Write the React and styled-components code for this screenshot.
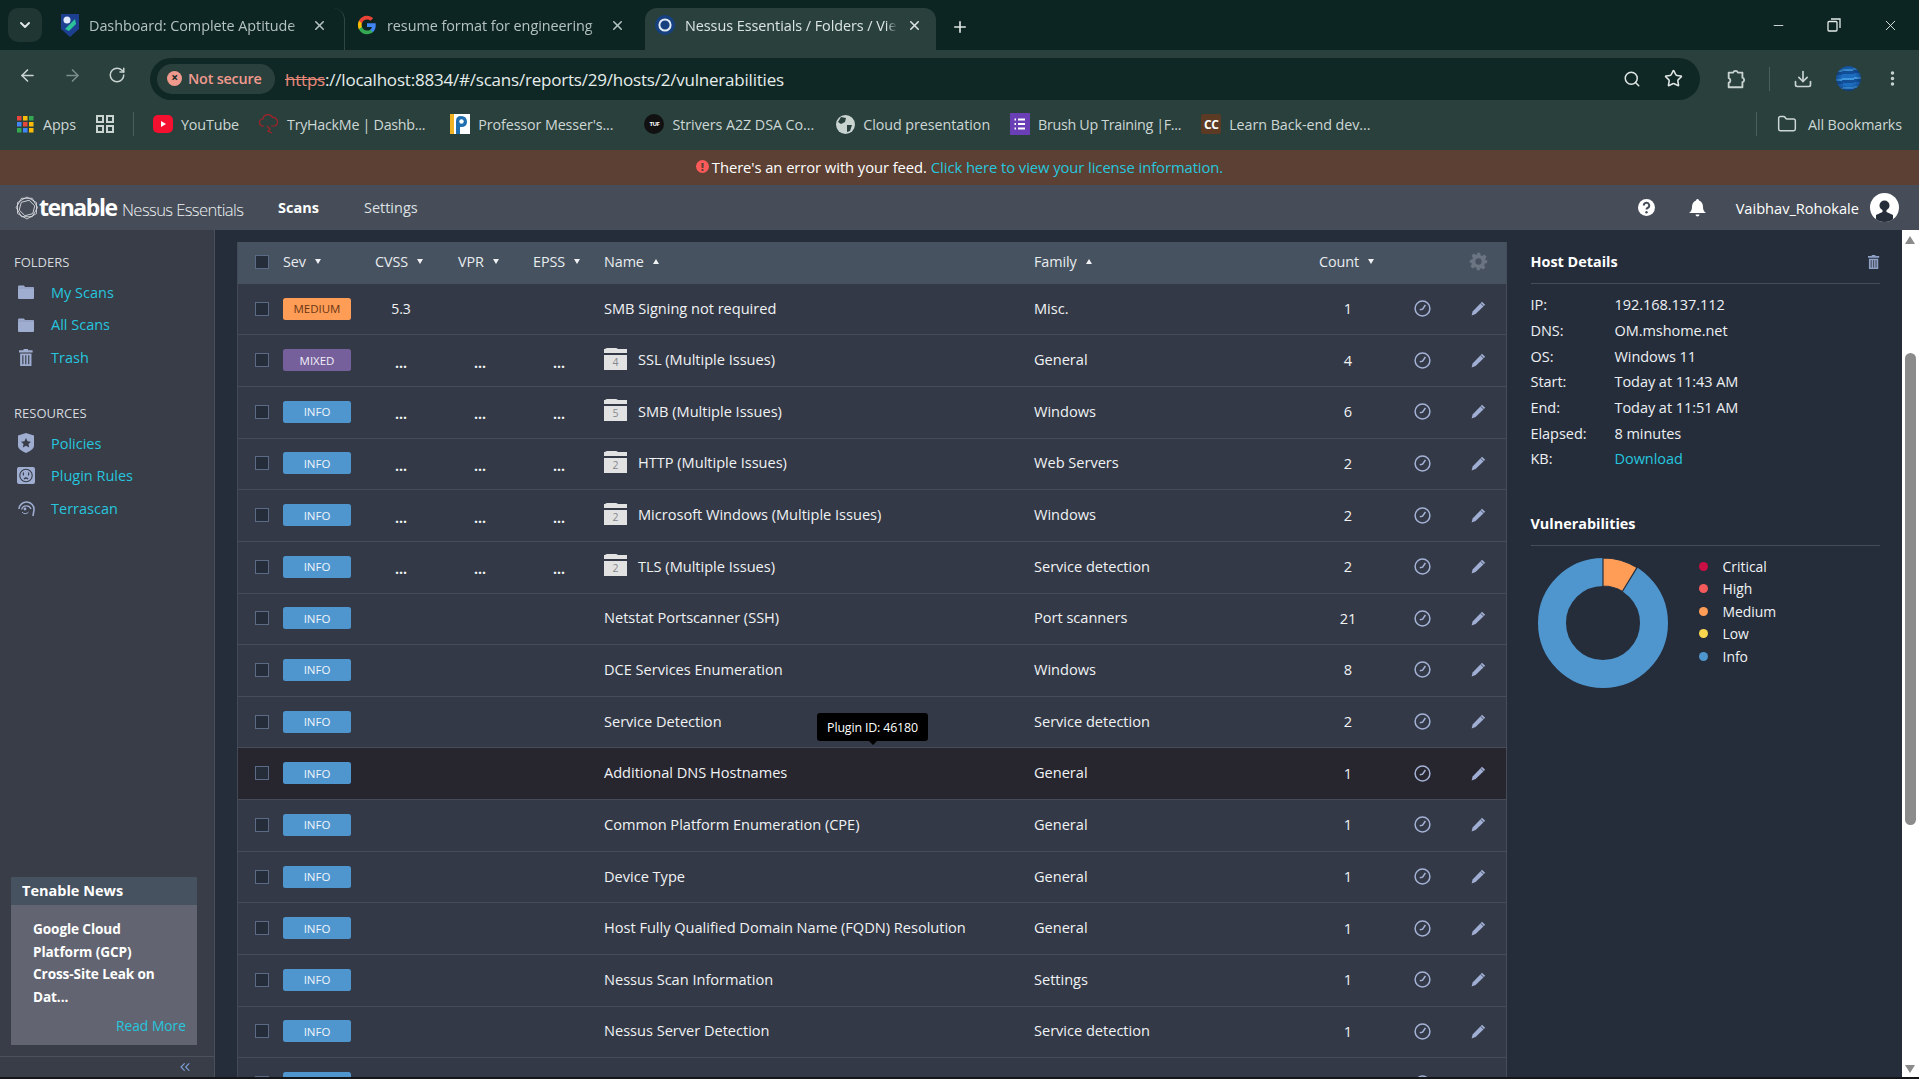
import React from 'react';
import styled, { createGlobalStyle } from 'styled-components';
import { ArrowLeft, ArrowRight, RotateCw, Search, Star, Download, EllipsisVertical, Minus, X, Plus, ChevronDown, Folder as FolderLine, ChevronsLeft } from 'lucide-react';

const Global = createGlobalStyle`
  html, body { margin: 0; padding: 0; background: #252d3b; overflow: hidden; }
  * { box-sizing: border-box; }
  #root { height: 1079px; }
`;
const Page = styled.div`
  height: 1079px; width: 1919px; display: flex; flex-direction: column; overflow: hidden;
  font-family: "Open Sans", "Noto Sans", sans-serif; color: #f0f2f4;
`;

/* ---------- browser chrome ---------- */
const TabStrip = styled.div`
  height: 50px; flex: none; background: #0d2522; display: flex; align-items: flex-end; padding-left: 8px;
`;
const TabMenu = styled.div`
  width: 34px; height: 34px; margin: 0 8px 8px 0; border-radius: 10px; background: #1f3633;
  display: flex; align-items: center; justify-content: center; color: #dfe6e4;
`;
const Tab = styled.div`
  width: ${p => p.$w}px; height: 42px; padding: 0 ${p => p.$pr}px 8px ${p => p.$pl}px; display: flex; align-items: center; gap: 10px;
  position: relative; border-radius: 12px 12px 0 0; font-size: 14.4px; white-space: nowrap;
  background: ${p => p.$active ? '#2a403d' : 'transparent'};
  color: ${p => p.$active ? '#dbe4e1' : '#b5c3c0'};
  ${p => p.$sep && `border-right: 1px solid #2f4643;`}
`;
const TabTitle = styled.span`
  flex: 1; overflow: hidden; letter-spacing: -0.05px;
  mask-image: linear-gradient(to right, #000 95%, transparent 100%);
`;
const NewTab = styled.div`
  margin: 0 0 14px 15px; color: #dfe6e4; display: flex;
`;
const WinControls = styled.div`
  margin-left: auto; height: 50px; display: flex; align-items: center; gap: 41px; padding: 0 20px 0 0; color: #e4ebe9;
`;
const Toolbar = styled.div`
  height: 50px; flex: none; background: #2a403d; display: flex; align-items: center; padding: 0 0 0 18px; color: #c9d4d1;
`;
const NavBtns = styled.div`
  display: flex; gap: 26px; width: 132px; align-items: center;
`;
const Omnibox = styled.div`
  width: 1550px; height: 42px; margin-top: 7px; border-radius: 21px; background: #102825; display: flex; align-items: center; padding: 0 17px 0 7px;
`;
const SecurePill = styled.div`
  width: 118px; height: 30px; border-radius: 15px; background: #2a403d; color: #f09a8e; display: flex; align-items: center; gap: 6px;
  padding-left: 10px; font-size: 14.4px; font-weight: 600; letter-spacing: -0.2px; white-space: nowrap;
`;
const NotSecureDot = styled.span`
  width: 15px; height: 15px; border-radius: 50%; background: #f09a8e; color: #102825; font-size: 12px; line-height: 14px; text-align: center; font-weight: 700; flex: none;
`;
const UrlText = styled.div`
  margin-left: 10px; padding-top: 1px; font-size: 17px; color: #e6eeec; white-space: nowrap; letter-spacing: -0.21px;
`;
const Https = styled.span`
  color: #e8887b; text-decoration: line-through;
`;
const OmniIcons = styled.div`
  margin-left: auto; display: flex; align-items: center; gap: 23px; color: #dfe6e4;
`;
const ToolIcons = styled.div`
  display: flex; align-items: center; color: #c9d4d1; padding-left: 25px; margin-top: 7px;
`;
const VSep = styled.span`
  width: 1px; height: ${p => p.$h || 22}px; background: #4a5f5c; margin: 0 ${p => p.$mr ?? 20}px 0 ${p => p.$ml ?? 20}px; flex: none;
`;
const ProfileGlobe = styled.span`
  width: 25px; height: 25px; border-radius: 50%; margin: 0 22px 0 23px; flex: none;
  background: radial-gradient(circle at 50% 50%, transparent 40%, #0c3268 100%), repeating-linear-gradient(175deg, #1c6cc0 0 4px, #3f97dd 4px 6px, #134f96 6px 9px);
`;
const Bookmarks = styled.div`
  height: 50px; flex: none; background: #2a403d; display: flex; align-items: center; padding: 0 17px 2px 17px;
  font-size: 14.3px; color: #cdd7d5; white-space: nowrap; letter-spacing: -0.1px;
`;
const Bookmark = styled.div`
  display: flex; align-items: center; gap: ${p => p.$gap ?? 8}px; margin-right: ${p => p.$mr ?? 21}px; letter-spacing: ${p => p.$ls ?? -0.1}px;
`;
const BookmarkEnd = styled(Bookmark)`
  margin: 0 0 0 auto; gap: 11px;
`;
const Badge = styled.span`
  width: 20px; height: 20px; flex: none; display: flex; align-items: center; justify-content: center; font-weight: 700;
  border-radius: ${p => p.$r || 2}px; background: ${p => p.$bg}; color: ${p => p.$c || '#fff'}; font-size: ${p => p.$fs || 11}px; letter-spacing: -0.5px;
`;

/* ---------- nessus ---------- */
const Banner = styled.div`
  height: 35px; flex: none; background: #5c4033; display: flex; align-items: center; justify-content: center; padding-bottom: 2px; font-size: 14.8px; color: #fff; letter-spacing: -0.08px;
`;
const AlertDot = styled.span`
  width: 13px; height: 13px; border-radius: 50%; background: #ff5a5a; color: #5c4033; font-size: 11px; line-height: 13px; font-weight: 800; text-align: center; margin-right: 3px;
`;
const CyanLink = styled.a`
  color: #26c6de; margin-left: ${p => p.$ml || 0}px;
`;
const AppHeader = styled.div`
  height: 45px; flex: none; background: #464d58; display: flex; align-items: center; padding: 0 20px 0 15px;
`;
const LogoWord = styled.span`
  font-size: 23px; font-weight: 700; letter-spacing: -1.45px; color: #fff; line-height: 1; width: 83px; flex: none;
`;
const LogoProduct = styled.span`
  font-size: 16.6px; font-weight: 300; letter-spacing: -0.6px; color: #f0f2f4; width: 156px; flex: none; padding-top: 3px; white-space: nowrap;
`;
const HeadNav = styled.span`
  font-size: 14.5px; font-weight: ${p => p.$on ? 700 : 400}; color: ${p => p.$on ? '#fff' : '#dde0e4'}; margin-right: 45px;
`;
const HeadRight = styled.div`
  margin-left: auto; display: flex; align-items: center; font-size: 14.6px; color: #fff; white-space: nowrap;
`;
const Avatar = styled.span`
  width: 29px; height: 29px; border-radius: 50%; background: #fff; display: flex; align-items: flex-end; justify-content: center; margin-left: 11px; overflow: hidden;
`;
const Body = styled.div`
  flex: 1; min-height: 0; display: flex; background: #252d3b;
`;
const Sidebar = styled.aside`
  width: 215px; flex: none; background: #383d48; border-right: 1px solid #4b505b; padding-top: 24px; display: flex; flex-direction: column;
`;
const SideLabel = styled.div`
  font-size: 13px; line-height: 16px; color: #d6d9dd; padding-left: 14px; margin-top: ${p => p.$mt || 0}px; margin-bottom: 6px;
`;
const SideItem = styled.div`
  height: 32.6px; display: flex; align-items: center; padding-left: 17px; gap: 16px; font-size: 14.5px; color: #26c6de;
`;
const SideIcon = styled.span`
  width: 18px; height: 18px; display: flex; align-items: center; justify-content: center; flex: none;
`;
const News = styled.div`
  margin: auto 17px 11px 11px; height: 168px; background: #626571; display: flex; flex-direction: column;
`;
const NewsHead = styled.div`
  height: 28px; background: #465260; padding-left: 11px; font-size: 14.5px; line-height: 27px; font-weight: 700; color: #fff;
`;
const NewsTitle = styled.div`
  padding: 13px 25px 0 22px; font-size: 13.6px; line-height: 22.5px; font-weight: 700; color: #fff; letter-spacing: -0.1px;
`;
const ReadMore = styled.div`
  margin-top: 8px; padding-right: 11px; text-align: right; font-size: 13.8px; color: #26c6de;
`;
const SideFoot = styled.div`
  height: 21px; flex: none; border-top: 1px solid #4b505b; display: flex; align-items: center; justify-content: flex-end; padding-right: 21px; color: #7f9fd6;
`;
const Content = styled.main`
  flex: 1; min-width: 0; display: flex;
`;
const TableWrap = styled.div`
  width: 1270px; margin: 12px 0 0 22px; flex: none; overflow: hidden; border-right: 1px solid #464c5a; border-left: 1px solid #424957;
`;
const cols = '45px 92px 83px 75px 71px 430px 285px 81px 44px 1fr';
const THead = styled.div`
  height: 41.7px; padding-bottom: 2px; background: #465260; display: grid; grid-template-columns: ${cols}; align-items: center; font-size: 14.4px; color: #e9ecef;
`;
const Th = styled.div`
  display: flex; align-items: center; gap: 9px; letter-spacing: -0.1px;
`;
const Caret = styled.span`
  width: 0; height: 0; border-left: 3px solid transparent; border-right: 3px solid transparent;
  ${p => p.$up ? 'border-bottom: 5px solid #f0f2f4;' : 'border-top: 5px solid #f0f2f4;'}
`;
const Row = styled.div`
  height: 51.65px; padding-bottom: 1px; position: relative; display: grid; grid-template-columns: ${cols}; align-items: center; font-size: 14.6px; color: #f0f2f4;
  background: ${p => p.$hover ? '#27252e' : '#333947'}; border-bottom: 1px solid #464c5a; letter-spacing: -0.02px;
`;
const Check = styled.span`
  width: 14px; height: 14px; margin-left: 17px; display: block; background: #252d3b; border: 1px solid #5c6b85;
`;
const Sev = styled.span`
  width: 68px; height: 22px; border-radius: 2.5px; display: flex; align-items: center; justify-content: center; font-size: 11.5px; font-weight: 400;
  background: ${p => p.$bg}; color: ${p => p.$c};
`;
const Metric = styled.span`
  width: ${p => p.$w}px; text-align: center; font-size: 14px; font-weight: ${p => p.$dots ? 700 : 400}; ${p => p.$dots && 'position: relative; top: 2px;'}
`;
const NameCell = styled.div`
  display: flex; align-items: center; gap: 11px; padding-bottom: 2px;
`;
const FamilyCell = styled.span`
  padding-bottom: 2px;
`;
const FolderBadge = styled.span`
  width: 23px; height: 21px; position: relative; flex: none; background: linear-gradient(#e2e2e2 0 4px, transparent 4px 6px, #e2e2e2 6px); color: #85888d; font-size: 10.5px; text-align: center; line-height: 27px;
  &::before { content: ''; position: absolute; left: 1px; top: -1px; width: 13px; height: 3px; background: #e2e2e2; border-radius: 2px 2px 0 0; }
`;
const CountCell = styled.span`
  width: 58px; text-align: center; padding-bottom: 1px;
`;
const Centered = styled.span`
  display: flex; justify-content: center; padding-left: ${p => p.$pl || 0}px;
`;
const Tooltip = styled.div`
  position: absolute; left: 579px; bottom: calc(100% + 7px); width: 111px; height: 28px; background: #000; border-radius: 3px; color: #fff; font-size: 12.4px;
  display: flex; align-items: center; justify-content: center; z-index: 2; white-space: nowrap; letter-spacing: -0.15px;
  &::after { content: ''; position: absolute; left: 50%; margin-left: -4px; top: 100%; border: 4px solid transparent; border-top-color: #000; }
`;
const Panel = styled.section`
  width: 394.5px; flex: none; padding: 20px 22px 0 23.5px;
`;
const PanelHead = styled.div`
  display: flex; justify-content: space-between; align-items: center; font-size: 14.4px; line-height: 24px; font-weight: 700; color: #fff; padding-bottom: 9px; border-bottom: 1px solid #464c5a;
  margin-top: ${p => p.$mt || 0}px;
`;
const Details = styled.dl`
  margin: 8px 0 0; display: grid; grid-template-columns: 84px 1fr; grid-auto-rows: 25.7px; align-items: center; font-size: 14.5px; color: #eef0f3; letter-spacing: -0.05px;
  dd { margin: 0; } dt { margin: 0; }
`;
const ChartRow = styled.div`
  display: flex; padding: 12px 0 0 7px; gap: 31px;
`;
const Legend = styled.ul`
  list-style: none; margin: -3px 0 0; padding: 0; font-size: 13.9px; color: #f0f2f4;
`;
const LegendItem = styled.li`
  height: 22.5px; display: flex; align-items: center; gap: 15px;
  &::before { content: ''; width: 9px; height: 9px; border-radius: 50%; background: ${p => p.$c}; }
`;
const Scrollbar = styled.div`
  flex: 1; background: #fff; display: flex; flex-direction: column; align-items: center; padding: 6px 0 4px;
`;
const ScrollUp = styled.span`
  width: 0; height: 0; border-left: 5.5px solid transparent; border-right: 5.5px solid transparent; border-bottom: 8px solid #8b8b8b;
`;
const ScrollDown = styled.span`
  width: 0; height: 0; margin-top: auto; border-left: 5.5px solid transparent; border-right: 5.5px solid transparent; border-top: 8px solid #8b8b8b;
`;
const Thumb = styled.div`
  width: 11.5px; height: 472px; margin-top: 109px; background: #8b8b8b; border-radius: 6px;
`;
const BottomEdge = styled.div`
  height: 2px; flex: none; background: #14161a;
`;

/* ---------- drawings ---------- */
const Lav = '#9fadd0';
const FolderIcon = () => (
  <svg width="16" height="14" viewBox="0 0 16 14"><path d="M0 2 Q0 .6 1.2 .6 H6 L7 2 H15 Q16 2 16 3 V13 Q16 14 15 14 H1 Q0 14 0 13Z" fill={Lav} /><path d="M0 3 H16" stroke="#838fb0" strokeWidth=".6" /></svg>
);
const TrashIcon = ({ c = Lav, h = 17 }) => (
  <svg width={h * 0.8} height={h} viewBox="0 0 12 15"><path d="M4 1 V0 H8 V1 H12 V3 H0 V1Z" fill={c} /><path d="M1 4 H11 V15 H1Z" fill={c} /><path d="M3.4 5.5V13.5M6 5.5V13.5M8.6 5.5V13.5" stroke="#383d48" strokeWidth="1" /></svg>
);
const ShieldIcon = () => (
  <svg width="16" height="20" viewBox="0 0 16 20"><path d="M8 0 L16 2.5 V13 Q16 16.5 8 20 Q0 16.5 0 13 V2.5Z" fill={Lav} /><path d="M8 5 L9.6 8.3 L13 8.7 L10.5 11 L11.2 14.4 L8 12.7 L4.8 14.4 L5.5 11 L3 8.7 L6.4 8.3Z" fill="#383d48" /></svg>
);
const PlugIcon = () => (
  <svg width="18" height="17" viewBox="0 0 18 17"><rect width="18" height="17" rx="2" fill={Lav} /><circle cx="9" cy="8.5" r="6.2" fill="none" stroke="#383d48" strokeWidth="1.1" /><path d="M6.4 5.5v3M11.6 5.5v3M7 12 Q9 10 11 12" stroke="#383d48" strokeWidth="1.2" fill="none" /></svg>
);
const TerraIcon = () => (
  <svg width="17" height="17" viewBox="0 0 17 17" fill="none" stroke={Lav}><path d="M1 9 A7.5 7.5 0 0 1 16 10 L15 16" strokeWidth="1.6" /><path d="M3.6 9.5 A5 5 0 0 1 13 9" strokeWidth="1.3" /><circle cx="7" cy="9" r="1.4" fill={Lav} stroke="none" /><path d="M4 12 A4 4 0 0 0 10.5 12" strokeWidth="1" /></svg>
);
const ClockIcon = () => (
  <svg width="17" height="17" viewBox="0 0 17 17" fill="none" stroke="#a4b2d6"><circle cx="8.5" cy="8.5" r="7.4" strokeWidth="1.5" /><path d="M11.4 5 L8.6 9.2 L5.8 9.8" strokeWidth="1.5" /></svg>
);
const PencilIcon = () => (
  <svg width="15" height="15" viewBox="0 0 15 15"><path d="M11 .8 L14.2 3.8 L4.6 13 L.6 14.6 L1.6 10.4Z" fill="#a0aed4" /><path d="M9.6 2.3 L12.8 5.3" stroke="#333947" strokeWidth=".8" /></svg>
);
const GearIcon = () => (
  <svg width="19" height="19" viewBox="0 0 24 24"><path fill="#6b7582" fillRule="evenodd" d="M10 1h4l.6 3.1 2.1.9 2.7-1.8 2.8 2.8-1.8 2.7.9 2.1L23 10v4l-3.1.6-.9 2.1 1.8 2.7-2.8 2.8-2.7-1.8-2.1.9L14 23h-4l-.6-3.1-2.1-.9-2.7 1.8-2.8-2.8 1.8-2.7-.9-2.1L1 14v-4l3.1-.6.9-2.1-1.8-2.7 2.8-2.8 2.7 1.8 2.1-.9zM12 8a4 4 0 1 0 0 8 4 4 0 0 0 0-8z" /></svg>
);
const TenableMark = () => (
  <svg width="24" height="24" viewBox="0 0 24 24" fill="none" stroke="#dfe2e7" strokeWidth=".8">
    <polygon points="12,1 21.5,6.5 21.5,17.500 12,23 2.500,17.500 2.500,6.500" />
    <polygon points="12,1 21.5,6.5 21.5,17.500 12,23 2.500,17.500 2.500,6.500" transform="rotate(30 12 12) scale(.97)" />
    <polygon points="12,4 19,8 19,16 12,20 5,16 5,8" transform="rotate(15 12 12)" />
  </svg>
);
const GoogleG = () => (
  <svg width="20" height="20" viewBox="0 0 48 48"><path fill="#4285F4" d="M45 24.5c0-1.6-.1-3.100-.4-4.500H24v8.500h11.800c-.5 2.700-2 5-4.400 6.600v5.500h7.100c4.100-3.800 6.500-9.400 6.500-16.100z" /><path fill="#34A853" d="M24 46c5.900 0 10.900-2 14.500-5.300l-7.100-5.500c-2 1.300-4.500 2.100-7.400 2.100-5.700 0-10.500-3.800-12.200-9H4.500v5.700C8.100 41.200 15.500 46 24 46z" /><path fill="#FBBC05" d="M11.800 28.300c-.4-1.300-.7-2.800-.7-4.300s.3-3 .7-4.300V14H4.500C3 17 2.200 20.400 2.200 24s.8 7 2.300 10z" /><path fill="#EA4335" d="M24 10.700c3.200 0 6.100 1.100 8.400 3.300l6.300-6.300C34.900 4.200 29.900 2 24 2 15.500 2 8.100 6.900 4.500 14l7.300 5.700c1.700-5.200 6.500-9 12.200-9z" /></svg>
);
const DashFav = () => (
  <svg width="18" height="24" viewBox="0 0 18 24"><path d="M0 1 H18 V16 L9 24 L0 16Z" fill="#1c3f8f" /><path d="M4 16 L14 6 L15 11 L8 18Z" fill="#2cc39a" /><circle cx="6" cy="7" r="3.5" fill="#dfeaff" /></svg>
);
const NessusFav = () => (
  <svg width="20" height="20" viewBox="0 0 20 20" fill="none"><circle cx="10" cy="10" r="10" fill="#17407f" /><circle cx="10" cy="10" r="5.6" stroke="#dfeaf5" strokeWidth="2" /></svg>
);
const AppsGrid = () => (
  <svg width="17" height="17" viewBox="0 0 17 17">
    {[['#e8453c', '#fbbc05', '#34a853'], ['#4285f4', '#e8453c', '#fbbc05'], ['#34a853', '#4285f4', '#fbbc05']].map((r, y) => r.map((c, x) => <rect key={`${x}${y}`} x={x * 6} y={y * 6} width="4.500" height="4.500" fill={c} />))}
  </svg>
);
const Tiles = () => (
  <svg width="18" height="18" viewBox="0 0 18 18" fill="none" stroke="#c9d4d1" strokeWidth="2"><rect x="1" y="1" width="6" height="6" /><rect x="11" y="1" width="6" height="6" /><rect x="1" y="11" width="6" height="6" /><rect x="11" y="11" width="6" height="6" /></svg>
);
const YouTubeFav = () => (
  <svg width="20" height="20" viewBox="0 0 20 20"><rect y="1" width="20" height="18" rx="5" fill="#f5102f" /><path d="M8 7 L13 10 L8 13Z" fill="#fff" /></svg>
);
const ThmFav = () => (
  <svg width="20" height="22" viewBox="0 0 20 22" fill="none" stroke="#a3232a" strokeWidth="1.2"><path d="M5 13 H4 A3.500 3.500 0 0 1 4 6 A5 5 0 0 1 13.500 4.500 A4.500 4.500 0 0 1 16 13 H12" /><path d="M8 13 L11 16 L9 18 L13 20" /></svg>
);
const ProfFav = () => (
  <svg width="20" height="20" viewBox="0 0 20 20"><rect width="20" height="20" rx="2" fill="#fff" /><path d="M0 0 H4 V20 H0Z" fill="#f0b323" /><path d="M4 20 V4 Q4 0 9 0 H20 V20Z" fill="#fff" /><path d="M6 20 V7 Q6 2 11 2 Q17 2 17 8 Q17 13 11 13 H10 V20Z" fill="#1f6fb0" /><circle cx="11.500" cy="7.500" r="2.200" fill="#fff" /></svg>
);
const GlobeFav = () => (
  <svg width="19" height="19" viewBox="0 0 19 19"><circle cx="9.500" cy="9.500" r="9.500" fill="#c9d4d1" /><path d="M5 2 L10 3 L9 7 L5 9 L2 7Z M11 10 L16 10 L14 16 L11 17Z" fill="#2a403d" /></svg>
);
const FormsFav = () => (
  <svg width="20" height="22" viewBox="0 0 20 22"><rect width="20" height="22" fill="#6a3fb5" /><path d="M8 6.500H15M8 11H15M8 15.500H15M4.500 6.500H6M4.500 11H6M4.500 15.500H6" stroke="#fff" strokeWidth="1.8" /></svg>
);
const ExtensionIcon = () => (
  <svg width="22" height="22" viewBox="0 0 24 24" fill="none" stroke="#c9d4d1" strokeWidth="2" strokeLinejoin="round"><path d="M4 5h5a2.600 2.600 0 0 1 5 0h5v5.500a2.600 2.600 0 0 1 0 5V21H4v-5a2.600 2.600 0 0 0 0-5z" /></svg>
);
const PersonGlyph = () => (
  <svg width="17" height="23" viewBox="0 0 17 23"><circle cx="8.500" cy="6.500" r="5" fill="#252d3b" /><path d="M6.500 10 H10.500 V13 L17 16 V23 H0 V16 L6.500 13Z" fill="#252d3b" /></svg>
);
const Donut = () => {
  const c = 65;
  const pt = (r, deg) => { const a = (deg - 90) * Math.PI / 180; return `${c + r * Math.cos(a)} ${c + r * Math.sin(a)}`; };
  return (
    <svg width="130" height="130" viewBox="0 0 130 130">
      <circle cx="65" cy="65" r="51" fill="none" stroke="#4f95ce" strokeWidth="28" />
      <path d={`M${pt(65, 0)} A65 65 0 0 1 ${pt(65, 31.5)} L${pt(37, 31.5)} A37 37 0 0 0 ${pt(37, 0)}Z`} fill="#ff9d57" stroke="#252d3b" strokeWidth="1.2" />
    </svg>
  );
};

/* ---------- data ---------- */
const sevStyle = {
  MEDIUM: { bg: '#ff9d57', c: '#6a3513' },
  MIXED: { bg: '#75609b', c: '#f3eff9' },
  INFO: { bg: '#4f95ce', c: '#f0f6fb' },
};
const rows = [
  ['MEDIUM', '5.3', null, 'SMB Signing not required', 'Misc.', '1'],
  ['MIXED', '...', 4, 'SSL (Multiple Issues)', 'General', '4'],
  ['INFO', '...', 5, 'SMB (Multiple Issues)', 'Windows', '6'],
  ['INFO', '...', 2, 'HTTP (Multiple Issues)', 'Web Servers', '2'],
  ['INFO', '...', 2, 'Microsoft Windows (Multiple Issues)', 'Windows', '2'],
  ['INFO', '...', 2, 'TLS (Multiple Issues)', 'Service detection', '2'],
  ['INFO', '', null, 'Netstat Portscanner (SSH)', 'Port scanners', '21'],
  ['INFO', '', null, 'DCE Services Enumeration', 'Windows', '8'],
  ['INFO', '', null, 'Service Detection', 'Service detection', '2'],
  ['INFO', '', null, 'Additional DNS Hostnames', 'General', '1'],
  ['INFO', '', null, 'Common Platform Enumeration (CPE)', 'General', '1'],
  ['INFO', '', null, 'Device Type', 'General', '1'],
  ['INFO', '', null, 'Host Fully Qualified Domain Name (FQDN) Resolution', 'General', '1'],
  ['INFO', '', null, 'Nessus Scan Information', 'Settings', '1'],
  ['INFO', '', null, 'Nessus Server Detection', 'Service detection', '1'],
  ['INFO', '', null, '', '', ''],
];
const lastVisibleLabel = 14;
const details = [
  ['IP:', '192.168.137.112'], ['DNS:', 'OM.mshome.net'], ['OS:', 'Windows 11'],
  ['Start:', 'Today at 11:43 AM'], ['End:', 'Today at 11:51 AM'], ['Elapsed:', '8 minutes'],
];
const legend = [['Critical', '#c90f43'], ['High', '#f55a5a'], ['Medium', '#ff9d57'], ['Low', '#fbd74f'], ['Info', '#4f95ce']];

export default function App() {
  return (
    <Page>
      <Global />
      <TabStrip>
        <TabMenu><ChevronDown size={16} strokeWidth={3} /></TabMenu>
        <Tab $w={295} $pl={11} $pr={17} $sep>
          <DashFav /><TabTitle>Dashboard: Complete Aptitude</TabTitle><X size={15} strokeWidth={2.5} />
        </Tab>
        <Tab $w={300} $pl={12} $pr={20}>
          <GoogleG /><TabTitle>resume format for engineering</TabTitle><X size={15} strokeWidth={2.5} />
        </Tab>
        <Tab $w={291} $pl={10} $pr={14} $active>
          <NessusFav /><TabTitle>Nessus Essentials / Folders / Vie</TabTitle><X size={15} strokeWidth={2.5} />
        </Tab>
        <NewTab><Plus size={18} strokeWidth={2.2} /></NewTab>
        <WinControls>
          <Minus size={15} strokeWidth={1.4} />
          <svg width="14" height="14" viewBox="0 0 14 14" fill="none" stroke="#e4ebe9" strokeWidth="1.3"><rect x="1" y="3.500" width="9" height="9.500" rx="1" /><path d="M4 1 H13 V10" /></svg>
          <X size={17} strokeWidth={1.3} />
        </WinControls>
      </TabStrip>
      <Toolbar>
        <NavBtns>
          <ArrowLeft size={19} strokeWidth={2} />
          <ArrowRight size={19} strokeWidth={2} color="#7a8e8b" />
          <RotateCw size={18} strokeWidth={2} />
        </NavBtns>
        <Omnibox>
          <SecurePill><NotSecureDot>×</NotSecureDot>Not secure</SecurePill>
          <UrlText><Https>https</Https>://localhost:8834/#/scans/reports/29/hosts/2/vulnerabilities</UrlText>
          <OmniIcons><Search size={18} strokeWidth={2} /><Star size={19} strokeWidth={2} /></OmniIcons>
        </Omnibox>
        <ToolIcons>
          <ExtensionIcon />
          <VSep $h={24} $ml={22} $mr={23} />
          <Download size={20} strokeWidth={2} />
          <ProfileGlobe />
          <EllipsisVertical size={19} strokeWidth={2.4} />
        </ToolIcons>
      </Toolbar>
      <Bookmarks>
        <Bookmark $mr={20} $gap={9}><AppsGrid /><span>Apps</span></Bookmark>
        <Tiles />
        <VSep $h={24} $ml={19} $mr={19} />
        <Bookmark $mr={20}><YouTubeFav /><span>YouTube</span></Bookmark>
        <Bookmark $mr={25} $ls={-0.28}><ThmFav /><span>TryHackMe | Dashb...</span></Bookmark>
        <Bookmark $mr={31}><ProfFav /><span>Professor Messer's...</span></Bookmark>
        <Bookmark $mr={22} $ls={-0.05}><Badge $bg="#111" $r={10} $fs={6}>TUF</Badge><span>Strivers A2Z DSA Co...</span></Bookmark>
        <Bookmark $mr={20} $ls={-0.05}><GlobeFav /><span>Cloud presentation</span></Bookmark>
        <Bookmark $mr={20} $ls={-0.32}><FormsFav /><span>Brush Up Training |F...</span></Bookmark>
        <Bookmark $ls={-0.05}><Badge $bg="#5c3a24" $fs={12}>CC</Badge><span>Learn Back-end dev...</span></Bookmark>
        <BookmarkEnd><VSep $h={24} $ml={0} $mr={9} /><FolderLine size={20} strokeWidth={1.8} /><span>All Bookmarks</span></BookmarkEnd>
      </Bookmarks>
      <Banner>
        <AlertDot>!</AlertDot>There's an error with your feed.<CyanLink $ml={4}>Click here to view your license information.</CyanLink>
      </Banner>
      <AppHeader>
        <TenableMark /><LogoWord>tenable</LogoWord><LogoProduct>Nessus Essentials</LogoProduct>
        <HeadNav $on>Scans</HeadNav><HeadNav>Settings</HeadNav>
        <HeadRight>
          <svg width="17" height="17" viewBox="0 0 17 17"><circle cx="8.500" cy="8.500" r="8.500" fill="#fff" /><path d="M5.800 6.500 A2.700 2.700 0 1 1 9.500 9 Q8.500 9.500 8.500 10.500" fill="none" stroke="#464d58" strokeWidth="2" /><circle cx="8.500" cy="13.200" r="1.200" fill="#464d58" /></svg>
          <svg style={{ margin: '0 30px 0 34px' }} width="17" height="18" viewBox="0 0 17 18"><path d="M8.500 0 Q10 0 10 1.500 Q14 3 14 8 Q14 12 17 14 H0 Q3 12 3 8 Q3 3 7 1.500 Q7 0 8.500 0Z" fill="#fff" /><path d="M6.500 15.500 A2 2 0 0 0 10.500 15.500Z" fill="#fff" /></svg>
          Vaibhav_Rohokale
          <Avatar><PersonGlyph /></Avatar>
        </HeadRight>
      </AppHeader>
      <Body>
        <Sidebar>
          <SideLabel>FOLDERS</SideLabel>
          <SideItem><SideIcon><FolderIcon /></SideIcon>My Scans</SideItem>
          <SideItem><SideIcon><FolderIcon /></SideIcon>All Scans</SideItem>
          <SideItem><SideIcon><TrashIcon /></SideIcon>Trash</SideItem>
          <SideLabel $mt={31}>RESOURCES</SideLabel>
          <SideItem><SideIcon><ShieldIcon /></SideIcon>Policies</SideItem>
          <SideItem><SideIcon><PlugIcon /></SideIcon>Plugin Rules</SideItem>
          <SideItem><SideIcon><TerraIcon /></SideIcon>Terrascan</SideItem>
          <News>
            <NewsHead>Tenable News</NewsHead>
            <NewsTitle>Google Cloud Platform (GCP) Cross-Site Leak on Dat...</NewsTitle>
            <ReadMore>Read More</ReadMore>
          </News>
          <SideFoot><ChevronsLeft size={16} strokeWidth={1.6} /></SideFoot>
        </Sidebar>
        <Content>
          <TableWrap>
            <THead>
              <Check />
              <Th>Sev <Caret /></Th>
              <Th>CVSS <Caret /></Th>
              <Th>VPR <Caret /></Th>
              <Th>EPSS <Caret /></Th>
              <Th>Name <Caret $up /></Th>
              <Th>Family <Caret $up /></Th>
              <Th>Count <Caret /></Th>
              <span />
              <Centered $pl={7}><GearIcon /></Centered>
            </THead>
            {rows.map((r, i) => {
              const dots = r[1] === '...';
              return (
                <Row key={i} $hover={i === 9}>
                  <Check />
                  <Sev $bg={sevStyle[r[0]].bg} $c={sevStyle[r[0]].c}>{i <= lastVisibleLabel ? r[0] : ''}</Sev>
                  <Metric $w={52} $dots={dots}>{r[1]}</Metric>
                  <Metric $w={44} $dots={dots}>{dots ? '...' : ''}</Metric>
                  <Metric $w={52} $dots={dots}>{dots ? '...' : ''}</Metric>
                  <NameCell>{r[2] && <FolderBadge>{r[2]}</FolderBadge>}<span>{r[3]}</span></NameCell>
                  <FamilyCell>{r[4]}</FamilyCell>
                  <CountCell>{r[5]}</CountCell>
                  <Centered><ClockIcon /></Centered>
                  <Centered $pl={7}><PencilIcon /></Centered>
                  {i === 9 && <Tooltip>Plugin ID: 46180</Tooltip>}
                </Row>
              );
            })}
          </TableWrap>
          <Panel>
            <PanelHead>Host Details <TrashIcon c="#8fa0c6" h={14} /></PanelHead>
            <Details>
              {details.map(([k, v]) => <React.Fragment key={k}><dt>{k}</dt><dd>{v}</dd></React.Fragment>)}
              <dt>KB:</dt><dd><CyanLink>Download</CyanLink></dd>
            </Details>
            <PanelHead $mt={40}>Vulnerabilities</PanelHead>
            <ChartRow>
              <Donut />
              <Legend>{legend.map(([t, c]) => <LegendItem key={t} $c={c}>{t}</LegendItem>)}</Legend>
            </ChartRow>
          </Panel>
          <Scrollbar><ScrollUp /><Thumb /><ScrollDown /></Scrollbar>
        </Content>
      </Body>
      <BottomEdge />
    </Page>
  );
}
